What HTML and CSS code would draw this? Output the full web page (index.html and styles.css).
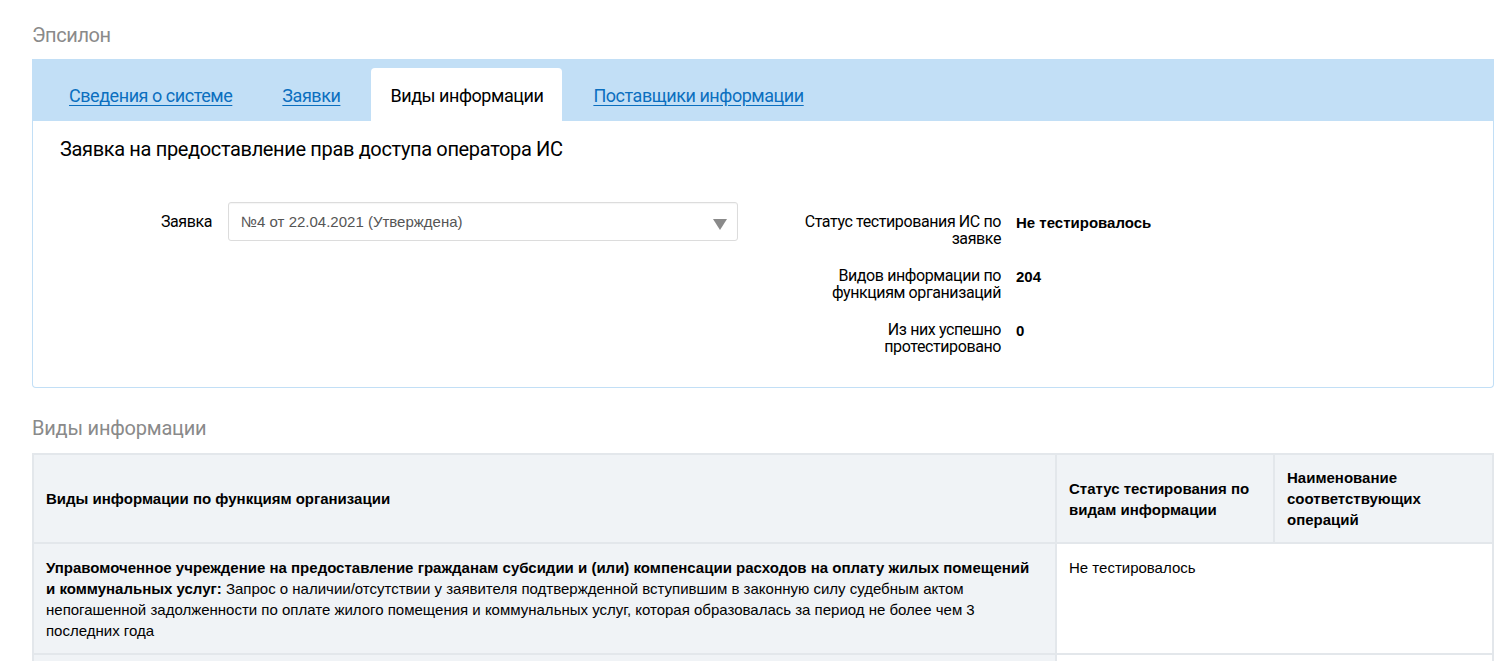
FILE: index.html
```html
<!DOCTYPE html>
<html lang="ru">
<head>
<meta charset="utf-8">
<title>Эпсилон</title>
<link rel="stylesheet" href="styles.css">
</head>
<body>
<div class="page">
  <h1 class="page-title">Эпсилон</h1>

  <div class="tabs">
    <a class="tab" href="#">Сведения о системе</a>
    <a class="tab" href="#">Заявки</a>
    <span class="tab tab-active">Виды информации</span>
    <a class="tab" href="#">Поставщики информации</a>
  </div>

  <div class="card">
    <h2 class="card-title">Заявка на предоставление прав доступа оператора ИС</h2>
    <div class="card-body">
      <div class="form-row">
        <label class="form-label">Заявка</label>
        <div class="select">
          <span class="select-text">№4 от 22.04.2021 (Утверждена)</span>
          <span class="select-arrow"></span>
        </div>
      </div>
      <dl class="info">
        <div class="info-row">
          <dt>Статус тестирования ИС по заявке</dt>
          <dd>Не тестировалось</dd>
        </div>
        <div class="info-row">
          <dt>Видов информации по функциям организаций</dt>
          <dd>204</dd>
        </div>
        <div class="info-row">
          <dt>Из них успешно протестировано</dt>
          <dd>0</dd>
        </div>
      </dl>
    </div>
  </div>

  <h2 class="section-title">Виды информации</h2>

  <table class="grid">
    <thead>
      <tr>
        <th class="col-main">Виды информации по функциям организации</th>
        <th class="col-status">Статус тестирования по видам информации</th>
        <th class="col-ops">Наименование соответствующих операций</th>
      </tr>
    </thead>
    <tbody>
      <tr>
        <td class="cell-main"><b>Управомоченное учреждение на предоставление гражданам субсидии и (или) компенсации расходов на оплату жилых помещений и коммунальных услуг:</b> Запрос о наличии/отсутствии у заявителя подтвержденной вступившим в законную силу судебным актом непогашенной задолженности по оплате жилого помещения и коммунальных услуг, которая образовалась за период не более чем 3 последних года</td>
        <td class="cell-status">Не тестировалось</td>
        <td class="cell-ops"></td>
      </tr>
      <tr>
        <td class="cell-main">&nbsp;</td>
        <td class="cell-status"></td>
        <td class="cell-ops"></td>
      </tr>
    </tbody>
  </table>
</div>
</body>
</html>
```

FILE: styles.css
```css
* { box-sizing: border-box; }

html, body {
  margin: 0;
  padding: 0;
  background: #fff;
}

body {
  font-family: "Liberation Sans", Arial, sans-serif;
  font-size: 15px;
  color: #000;
}

.page {
  padding: 0 16px 0 32px;
}

.page-title {
  margin: 0;
  padding-top: 22px;
  height: 59px;
  font-family: Roboto, "Liberation Sans", sans-serif;
  font-weight: 400;
  font-size: 20px;
  line-height: 26px;
  color: #8a8a8a;
  letter-spacing: -0.4px;
}

.tabs {
  display: flex;
  align-items: flex-end;
  gap: 12px;
  height: 62px;
  padding-left: 18px;
  background: #c2dff6;
}

.tab {
  display: block;
  padding: 0 19px;
  height: 53px;
  line-height: 56px;
  font-family: Roboto, "Liberation Sans", sans-serif;
  font-size: 18px;
  letter-spacing: -0.45px;
  color: #0b6fbf;
  text-decoration: underline;
  text-underline-offset: 3px;
  white-space: nowrap;
}

.tab-active {
  background: #fff;
  color: #000;
  text-decoration: none;
  border-radius: 4px 4px 0 0;
}

.card {
  border: 1px solid #c2dff6;
  border-top: none;
  border-radius: 0 0 4px 4px;
  height: 267px;
  padding: 14px 27px 0 27px;
}

.card-title {
  margin: 0;
  font-family: Roboto, "Liberation Sans", sans-serif;
  font-weight: 400;
  font-size: 20px;
  line-height: 28px;
  letter-spacing: -0.35px;
  color: #000;
}

.card-body {
  display: flex;
  padding-top: 39px;
}

.form-row {
  display: flex;
  align-items: center;
  height: 38px;
  gap: 16px;
}

.form-label {
  width: 152px;
  text-align: right;
  font-family: Roboto, "Liberation Sans", sans-serif;
  font-size: 16px;
  letter-spacing: -0.4px;
  color: #000;
}

.select {
  position: relative;
  width: 510px;
  height: 39px;
  border: 1px solid #dcdcdc;
  border-radius: 3px;
  display: flex;
  align-items: center;
  padding-left: 12px;
  box-shadow: inset 0 1px 1px rgba(0,0,0,0.04);
}

.select-text {
  font-size: 15px;
  color: #555;
}

.select-arrow {
  position: absolute;
  right: 10px;
  top: 16px;
  width: 0;
  height: 0;
  border-left: 7px solid transparent;
  border-right: 7px solid transparent;
  border-top: 11px solid #8a8a8a;
}

.info {
  margin: 0 0 0 63px;
  display: flex;
  flex-direction: column;
  gap: 20px;
  padding-top: 11px;
}

.info-row {
  display: flex;
  gap: 15px;
}

.info dt {
  width: 200px;
  text-align: right;
  font-family: Roboto, "Liberation Sans", sans-serif;
  font-size: 16px;
  line-height: 17px;
  letter-spacing: -0.4px;
  color: #000;
}

.info dd {
  margin: 0;
  font-weight: 700;
  font-size: 15px;
  line-height: 17px;
  padding-top: 1px;
}

.section-title {
  margin: 0;
  padding-top: 27px;
  height: 65px;
  font-family: Roboto, "Liberation Sans", sans-serif;
  font-weight: 400;
  font-size: 20px;
  line-height: 26px;
  color: #8a8a8a;
  letter-spacing: -0.2px;
}

.grid {
  width: 100%;
  border-collapse: collapse;
  table-layout: fixed;
}

.grid th,
.grid td {
  border: 2px solid #e3e7eb;
  padding: 12px 12px;
  font-size: 15px;
  line-height: 21px;
  text-align: left;
  vertical-align: top;
}

.grid th {
  background: #f0f3f6;
  font-weight: 700;
  vertical-align: middle;
  height: 86px;
}

.col-main { width: 1023px; }
.col-status { width: 218px; }

.grid td {
  padding-top: 13px;
}

.grid td.cell-main {
  background: #f0f3f6;
  padding-right: 18px;
}

.grid td.cell-status {
  border-right: hidden;
}

.grid td.cell-ops {
  border-left: hidden;
}

.grid tbody tr:first-child td {
  height: 110px;
}
```
